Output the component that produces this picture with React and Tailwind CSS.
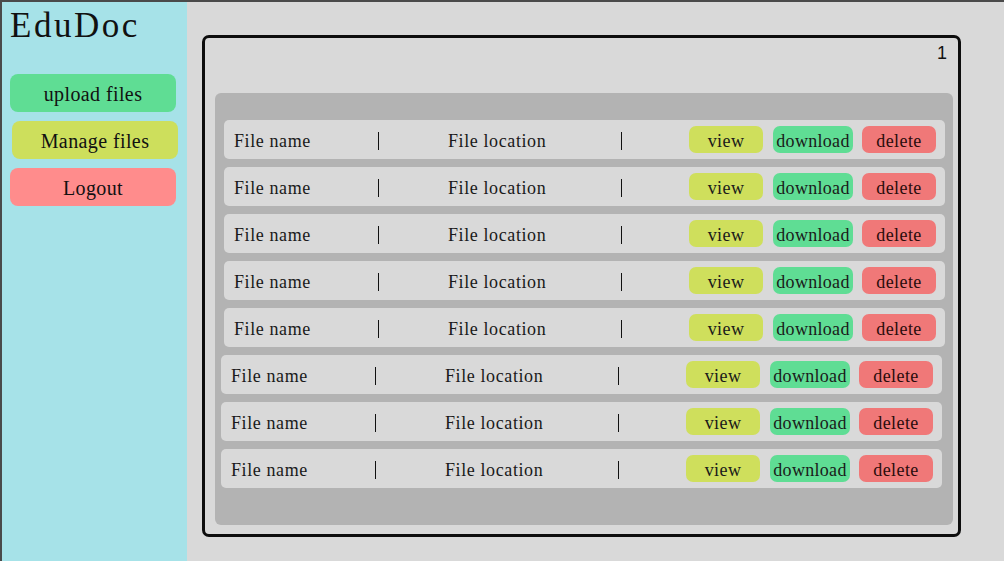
export default function App() {
  const rows = [0, 1, 2, 3, 4, 5, 6, 7];

  return (
    <div
      className="flex h-[561px] w-full overflow-hidden border-l-2 border-t-2 border-[#4a4a4a] bg-[#d9d9d9]"
      style={{ fontFamily: '"Liberation Serif", "DejaVu Serif", serif' }}
    >
      {/* sidebar */}
      <aside className="w-[185px] shrink-0 bg-[#a6e2e8] pl-[8px] pr-[8px] pt-[4px]">
        <h1 className="text-[35px] leading-[40px] tracking-[2.5px] text-[#111]">EduDoc</h1>
        <nav className="mt-[28px] flex flex-col gap-[9px]">
          <button className="h-[38px] w-[166px] rounded-[8px] bg-[#5fdd94] pt-[2px] text-[20px] tracking-[0.4px] text-[#111]">
            upload files
          </button>
          <button className="ml-[2px] h-[38px] w-[166px] rounded-[8px] bg-[#cddf5c] pt-[2px] text-[20px] tracking-[0.4px] text-[#111]">
            Manage files
          </button>
          <button className="h-[38px] w-[166px] rounded-[8px] bg-[#ff8c8c] pt-[2px] text-[20px] tracking-[0.4px] text-[#111]">
            Logout
          </button>
        </nav>
      </aside>

      {/* main */}
      <main className="flex-1 pl-[15px] pt-[33px]">
        <div className="flex h-[502px] w-[759px] flex-col rounded-[7px] border-[3px] border-[#0d0d0d] pb-[9px] pl-[10px] pr-[5px]">
          <div className="flex h-[55px] justify-end pr-[6px] pt-[2px]">
            <span className="text-[18px] text-[#111]" style={{ fontFamily: '"Liberation Sans", Arial, sans-serif' }}>
              1
            </span>
          </div>
          <div className="flex flex-1 flex-col gap-[8px] rounded-[6px] bg-[#b3b3b3] pt-[27px]">
            {rows.map((i) => (
              <div
                key={i}
                className={`flex h-[39px] items-center rounded-[5px] bg-[#d9d9d9] pl-[10px] pr-[9px] text-[#1a1a1a] ${
                  i < 5 ? 'ml-[9px] mr-[8px]' : 'ml-[6px] mr-[11px]'
                }`}
              >
                <span className="w-[144px] pt-[3px] text-[18px] tracking-[0.6px]">File name</span>
                <div className="mt-[3px] h-[18px] w-px bg-[#111]" />
                <span className="w-[242px] pl-[69px] pt-[3px] text-[18px] tracking-[0.6px]">File location</span>
                <div className="mt-[3px] h-[18px] w-px bg-[#111]" />
                <div className="ml-auto flex items-center">
                  <button className="h-[27px] w-[74px] rounded-[7px] bg-[#cfdf5c] pt-[2px] text-[18px] leading-none tracking-[0.4px]">
                    view
                  </button>
                  <button className="ml-[10px] h-[27px] w-[80px] rounded-[7px] bg-[#5fdd94] pt-[2px] text-[18px] leading-none tracking-[0.3px]">
                    download
                  </button>
                  <button className="ml-[9px] h-[27px] w-[74px] rounded-[7px] bg-[#f07878] pt-[2px] text-[18px] leading-none tracking-[0.4px] text-[#2a0c0c]">
                    delete
                  </button>
                </div>
              </div>
            ))}
          </div>
        </div>
      </main>
    </div>
  );
}
